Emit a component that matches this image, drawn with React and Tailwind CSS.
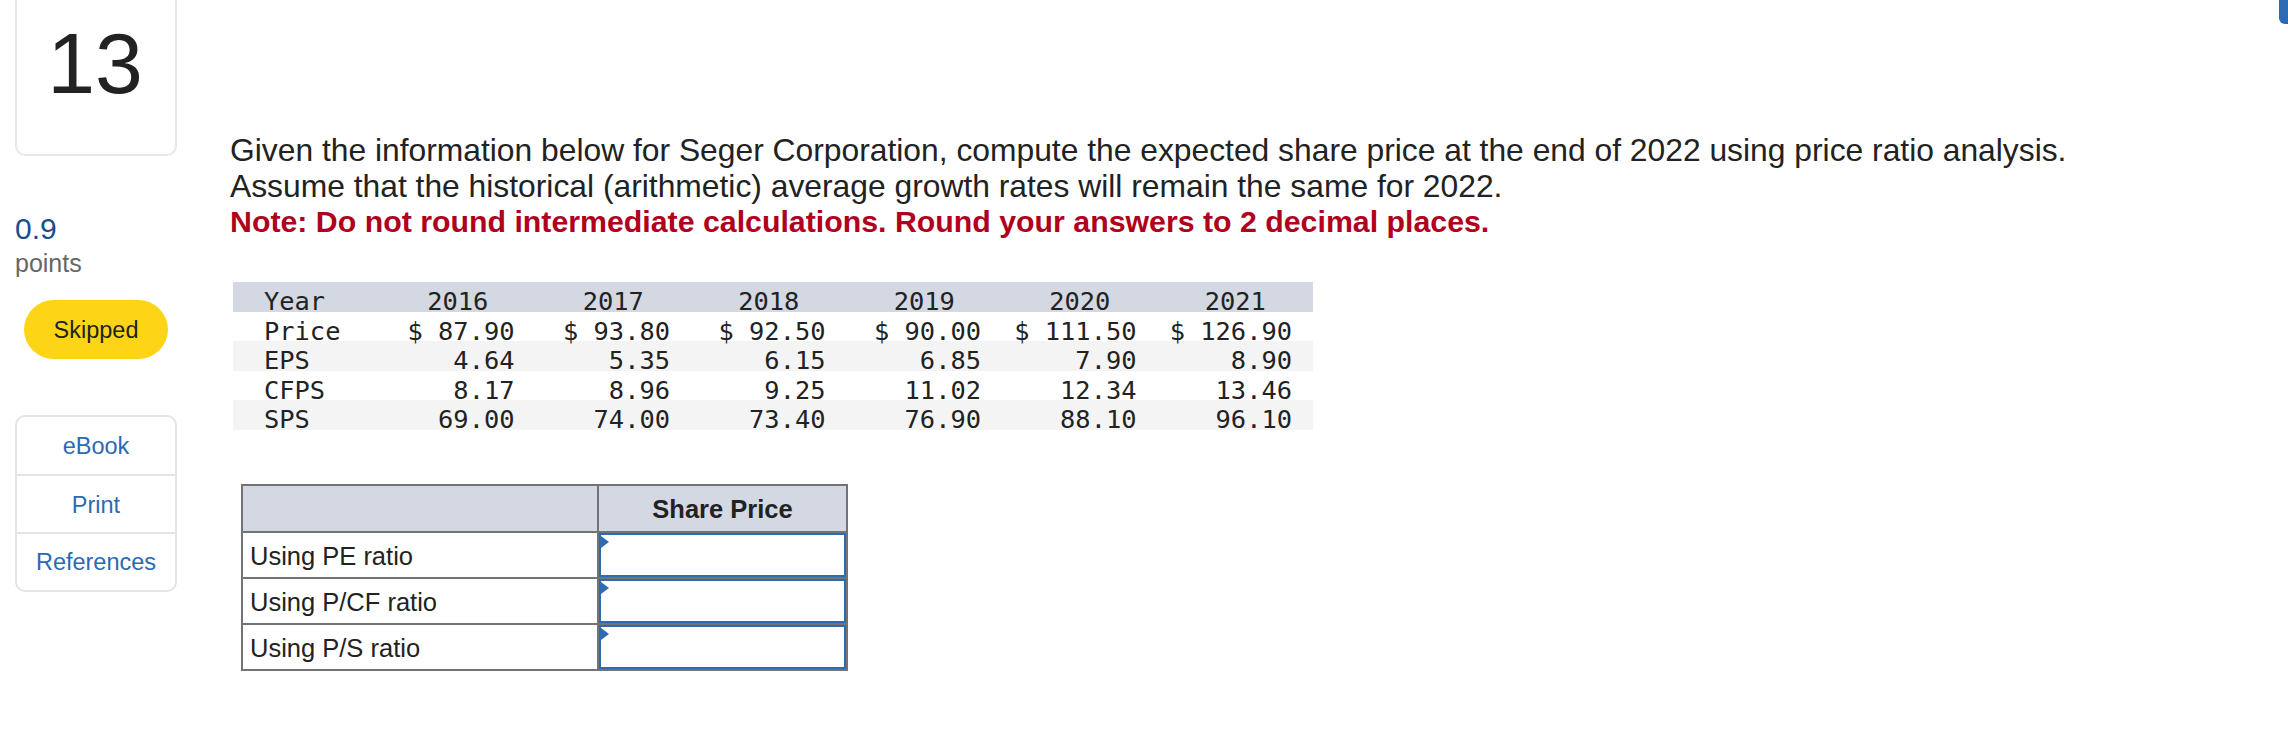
import React from 'react';

const years = ['2016', '2017', '2018', '2019', '2020', '2021'];

const rows = [
  { label: 'Price', values: ['$ 87.90', '$ 93.80', '$ 92.50', '$ 90.00', '$ 111.50', '$ 126.90'] },
  { label: 'EPS', values: ['4.64', '5.35', '6.15', '6.85', '7.90', '8.90'], shade: true },
  { label: 'CFPS', values: ['8.17', '8.96', '9.25', '11.02', '12.34', '13.46'] },
  { label: 'SPS', values: ['69.00', '74.00', '73.40', '76.90', '88.10', '96.10'], shade: true },
];

const answers = ['Using PE ratio', 'Using P/CF ratio', 'Using P/S ratio'];

const Sidebar = () => (
  <div className="w-[177px] shrink-0 pl-[15px]">
    <div className="-mt-[10px] h-[166px] border-2 border-t-0 border-[#e8e8e8] rounded-b-[10px] flex justify-center pt-[30px]">
      <span className="text-[86px] leading-none text-[#222] pr-[2px]">13</span>
    </div>
    <div className="mt-[58px] text-[30px] leading-none text-[#1b4d8e]">0.9</div>
    <div className="mt-[7px] text-[25px] leading-none text-[#666]">points</div>
    <div className="mt-[24px] ml-[9px] w-[144px] h-[59px] rounded-full bg-[#fdd516] flex items-center justify-center pt-[2px] text-[23.5px] text-[#222]">
      Skipped
    </div>
    <div className="mt-[56px] w-[162px] border-2 border-[#e6e6e6] rounded-[10px] text-[23.5px] text-[#2b6ab2]">
      <div className="h-[59px] flex items-center justify-center pt-[2px] border-b-2 border-[#e6e6e6]">eBook</div>
      <div className="h-[58px] flex items-center justify-center pt-[4px] border-b-2 border-[#e6e6e6]">Print</div>
      <div className="h-[56px] flex items-center justify-center pt-[2px]">References</div>
    </div>
  </div>
);

const DataTable = () => (
  <div className="mt-[42px] ml-[3px] w-[1080px] font-['DejaVu_Sans_Mono',monospace] text-[25.4px] text-[#222] whitespace-pre">
    <div className="grid grid-cols-[147px_repeat(6,155.5px)] h-[29.5px] items-center pb-[3px] bg-[#d3d8e2]">
      <div className="pl-[31px]">Year</div>
      {years.map((y) => (
        <div key={y} className="text-center">{y}</div>
      ))}
    </div>
    {rows.map((r) => (
      <div
        key={r.label}
        className={`grid grid-cols-[147px_repeat(6,155.5px)] h-[29.5px] items-center pb-[3px] ${r.shade ? 'bg-[#f4f4f4]' : 'bg-white'}`}
      >
        <div className="pl-[31px]">{r.label}</div>
        {r.values.map((v, i) => (
          <div key={i} className="text-right pr-[21px]">{v}</div>
        ))}
      </div>
    ))}
  </div>
);

const AnswerTable = () => (
  <table className="mt-[54px] ml-[11px] border-collapse text-[25.5px] text-[#222]">
    <thead>
      <tr className="h-[47px] bg-[#d3d8e2]">
        <th className="w-[356px] border-2 border-[#737373]"></th>
        <th className="w-[249px] border-2 border-[#737373] font-bold text-center pt-[2px]">Share Price</th>
      </tr>
    </thead>
    <tbody>
      {answers.map((a) => (
        <tr key={a} className="h-[46px]">
          <td className="border-2 border-[#737373] pl-[7px] pt-[3px] align-middle">{a}</td>
          <td className="border-2 border-[#737373] p-0">
            <div className="relative h-[44px] border-2 border-[#2f6bb3] bg-white">
              <span className="absolute left-0 top-[1px] w-0 h-0 border-y-[6px] border-y-transparent border-l-[8px] border-l-[#2f6bb3]" />
            </div>
          </td>
        </tr>
      ))}
    </tbody>
  </table>
);

export default function App() {
  return (
    <div className="relative w-[2288px] h-[748px] overflow-hidden bg-white flex font-['Liberation_Sans',Arial,sans-serif]">
      <Sidebar />
      <div className="pl-[53px] pt-[132px]">
        <div className="text-[31.8px] leading-[36px] text-[#222] whitespace-nowrap">
          <div>Given the information below for Seger Corporation, compute the expected share price at the end of 2022 using price ratio analysis.</div>
          <div>Assume that the historical (arithmetic) average growth rates will remain the same for 2022.</div>
          <div className="text-[30.3px] font-bold text-[#b0001e]">Note: Do not round intermediate calculations. Round your answers to 2 decimal places.</div>
        </div>
        <DataTable />
        <AnswerTable />
      </div>
      <div className="absolute top-0 right-0 w-[9px] h-[24px] bg-[#2d6ab3] rounded-bl-[6px]" />
    </div>
  );
}
